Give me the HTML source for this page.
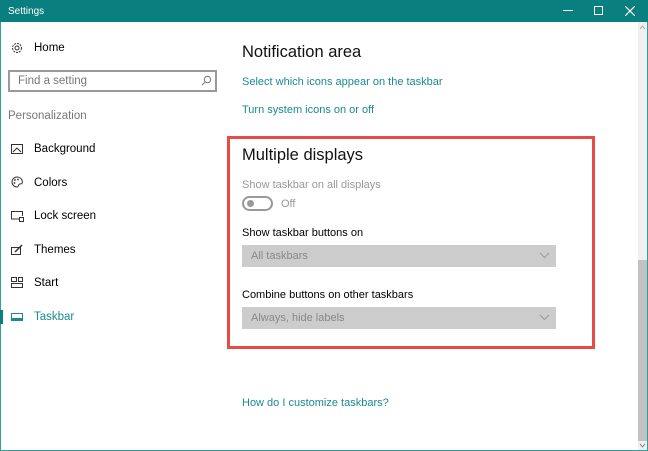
<!DOCTYPE html>
<html><head><style>
*{margin:0;padding:0;box-sizing:border-box}
body{width:648px;height:451px;background:#fff;font-family:"Liberation Sans",sans-serif;position:relative;overflow:hidden;font-size:11px;color:#000}
.a{position:absolute;white-space:nowrap}
.tb{left:0;top:0;width:648px;height:22px;background:#0a7f80}
.bl{left:0;top:22px;width:1px;height:429px;background:#2aa0a0}
.br{left:647px;top:22px;width:1px;height:429px;background:#2aa0a0}
.bb{left:0;top:450px;width:648px;height:1px;background:#2aa0a0}
.nav{left:34px;font-size:11.5px;color:#000}
.lnk{color:#1a8a8f;left:242px}
.dd{left:242px;width:314px;height:22px;background:#cccccc;color:#888}
.dd span{position:absolute;left:9px;top:5px}
</style></head><body>
<div class="a tb"></div>
<div class="a" style="left:8px;top:6px;color:#fff;font-size:10px">Settings</div>
<div class="a" style="left:563px;top:10px;width:10px;height:1px;background:#fff"></div>
<div class="a" style="left:594px;top:6px;width:9px;height:9px;border:1px solid #fff"></div>
<svg class="a" style="left:625px;top:6px" width="10" height="10"><path d="M0 0L10 10M10 0L0 10" stroke="#fff" stroke-width="1.2"/></svg>
<div class="a bl"></div><div class="a br"></div><div class="a bb"></div>
<div class="a" style="left:638px;top:22px;width:9px;height:428px;background:#f0f0f0"></div>
<div class="a" style="left:638px;top:260px;width:9px;height:181px;background:#c2c2c2"></div>
<svg class="a" style="left:639px;top:25px" width="7" height="5"><path d="M1 4L3.5 1L6 4" stroke="#aaa" fill="none"/></svg>
<svg class="a" style="left:639px;top:443px" width="7" height="5"><path d="M1 1L3.5 4L6 1" stroke="#888" fill="none"/></svg>
<svg class="a" style="left:11px;top:42px" width="12" height="12"><circle cx="6" cy="6" r="4.5" fill="none" stroke="#333" stroke-dasharray="2 1"/><circle cx="6" cy="6" r="2" fill="none" stroke="#333"/></svg>
<div class="a nav" style="top:42px">Home</div>
<div class="a" style="left:8px;top:70px;width:209px;height:22px;border:2px solid #999"></div>
<div class="a" style="left:18px;top:75px;color:#777;font-size:11.5px">Find a setting</div>
<svg class="a" style="left:201px;top:75px" width="11" height="11"><circle cx="6.5" cy="4.5" r="3.2" fill="none" stroke="#777"/><path d="M4.3 6.8L1 10" stroke="#777"/></svg>
<div class="a" style="left:8px;top:110px;color:#777;font-size:11.5px">Personalization</div>
<svg class="a" style="left:11px;top:143px" width="13" height="12"><rect x="0.5" y="1.5" width="11" height="9" fill="none" stroke="#333"/><path d="M2 9L6 5L10 9" stroke="#333" fill="none"/></svg>
<div class="a nav" style="top:143px">Background</div>
<svg class="a" style="left:11px;top:176px" width="13" height="12"><path d="M6 1A5 5 0 1 0 6 11C8 11 7 8 9 8C11 8 12 7 11 4C10 2 8 1 6 1Z" fill="none" stroke="#333"/><circle cx="4" cy="4" r="0.9" fill="#333"/><circle cx="7" cy="3.5" r="0.9" fill="#333"/><circle cx="3.5" cy="7" r="0.9" fill="#333"/></svg>
<div class="a nav" style="top:177px">Colors</div>
<svg class="a" style="left:11px;top:210px" width="13" height="12"><path d="M8 9H0.5V1.5H11.5V6" fill="none" stroke="#333"/><rect x="8.5" y="7.5" width="4" height="4" fill="none" stroke="#333"/></svg>
<div class="a nav" style="top:210px">Lock screen</div>
<svg class="a" style="left:11px;top:244px" width="13" height="12"><rect x="0.5" y="3.5" width="9" height="7" fill="none" stroke="#333"/><path d="M4 8L11 1" stroke="#333" stroke-width="1.5"/></svg>
<div class="a nav" style="top:244px">Themes</div>
<svg class="a" style="left:11px;top:277px" width="13" height="12"><rect x="0.5" y="0.5" width="5" height="4" fill="none" stroke="#333"/><rect x="7.5" y="0.5" width="4" height="4" fill="none" stroke="#333"/><rect x="0.5" y="6.5" width="11" height="4" fill="none" stroke="#333"/></svg>
<div class="a nav" style="top:277px">Start</div>
<div class="a" style="left:0;top:310px;width:3px;height:14px;background:#0a7f80"></div>
<svg class="a" style="left:11px;top:312px" width="13" height="10"><rect x="0.5" y="1.5" width="11" height="7" fill="none" stroke="#1a8a8f"/><rect x="1" y="6" width="10" height="2" fill="#1a8a8f"/></svg>
<div class="a nav" style="top:311px;color:#1a8a8f">Taskbar</div>
<div class="a" style="left:242px;top:43px;font-size:16.5px;color:#111">Notification area</div>
<div class="a lnk" style="top:76px">Select which icons appear on the taskbar</div>
<div class="a lnk" style="top:104px">Turn system icons on or off</div>
<div class="a" style="left:227px;top:136px;width:368px;height:213px;border:3px solid #e84a45"></div>
<div class="a" style="left:242px;top:146px;font-size:16.5px;color:#111">Multiple displays</div>
<div class="a" style="left:242px;top:179px;color:#999">Show taskbar on all displays</div>
<div class="a" style="left:242px;top:196px;width:31px;height:15px;border:2px solid #999;border-radius:8px"></div>
<div class="a" style="left:247px;top:200px;width:7px;height:7px;border-radius:50%;background:#999"></div>
<div class="a" style="left:281px;top:198px;color:#999">Off</div>
<div class="a" style="left:242px;top:227px">Show taskbar buttons on</div>
<div class="a dd" style="top:245px"><span>All taskbars</span></div>
<svg class="a" style="left:539px;top:252px" width="11" height="7"><path d="M1 1L5.5 5.5L10 1" stroke="#999" fill="none"/></svg>
<div class="a" style="left:242px;top:289px">Combine buttons on other taskbars</div>
<div class="a dd" style="top:307px"><span>Always, hide labels</span></div>
<svg class="a" style="left:539px;top:314px" width="11" height="7"><path d="M1 1L5.5 5.5L10 1" stroke="#999" fill="none"/></svg>
<div class="a lnk" style="top:397px">How do I customize taskbars?</div>
</body></html>
